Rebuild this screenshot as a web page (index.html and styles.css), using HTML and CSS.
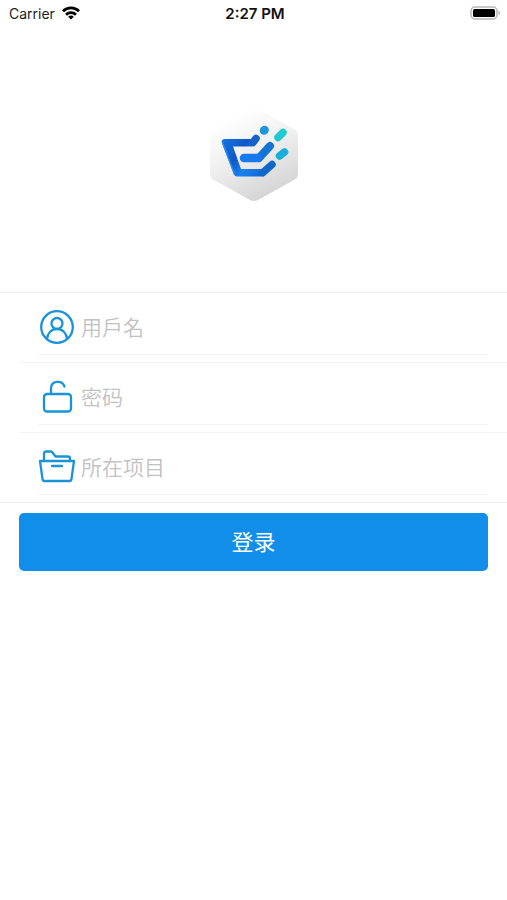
FILE: index.html
```
<!DOCTYPE html>
<html lang="zh">
<head>
  <meta charset="UTF-8">
  <meta name="viewport" content="width=device-width, initial-scale=1.0">
  <title>登录</title>
  <link rel="stylesheet" href="styles.css">
</head>
<body>
  <header class="status-bar">
    <div class="carrier">
      <span>Carrier</span>
      <svg width="18" height="14" viewBox="0 0 18 14" fill="none" stroke="#000" stroke-width="2.8">
        <path d="M1 5.2a11.4 11.4 0 0 1 16 0"/>
        <path d="M4 8.7a7.2 7.2 0 0 1 10 0"/>
        <path d="M9 13.6L6.2 10.8a4 4 0 0 1 5.6 0z" fill="#000" stroke="none"/>
      </svg>
    </div>
    <time class="time">2:27 PM</time>
    <div class="battery">
      <svg width="31" height="14" viewBox="0 0 31 14">
        <rect x="1" y="1" width="26" height="12" rx="4" fill="#fff" stroke="#b8b8b8" stroke-width="1.5"/>
        <rect x="3" y="3" width="22" height="8" rx="1.5" fill="#000"/>
        <path d="M28.5 4.8c2 .8 2 3.6 0 4.4z" fill="#b0b0b0"/>
      </svg>
    </div>
  </header>
  <main>
    <div class="logo">
      <svg width="88" height="94" viewBox="0 0 88 94">
        <defs>
          <linearGradient id="hex" x1="0.2" y1="0" x2="0.65" y2="1">
            <stop offset="0.1" stop-color="#fff"/>
            <stop offset="0.5" stop-color="#efeff0"/>
            <stop offset="1" stop-color="#d2d2d3"/>
          </linearGradient>
          <linearGradient id="blue" gradientUnits="userSpaceOnUse" x1="14" y1="34" x2="58" y2="66">
            <stop offset="0" stop-color="#1670e2"/>
            <stop offset="0.35" stop-color="#0f58c4"/>
            <stop offset="0.6" stop-color="#1b80f0"/>
            <stop offset="1" stop-color="#1164cc"/>
          </linearGradient>
        </defs>
        <path d="M40 2q4-2 8 0l36 20q4 2 4 7v38q0 4-4 6L48 93q-4 2-8 0L4 73q-4-2-4-6V29q0-5 4-7z" fill="url(#hex)"/>
        <path d="M15 32H46L42 39.500H23L31 62H58L55 68Q54 69.500 52 69.500H27Q25 69.500 24 67.500L12 36Q11 32 15 32z" fill="url(#blue)"/>
        <path d="M12.500 35.500L24.500 67" stroke="#2590f8" stroke-width="1.500" stroke-linecap="round"/>
        <g fill="none" stroke-linecap="round" stroke-linejoin="round">
          <path d="M43 35.500l3-4" stroke="#1262c8" stroke-width="7.500"/>
          <path d="M49 51L60 39" stroke="#1473d5" stroke-width="8"/>
          <path d="M34 51H48" stroke="#1879ec" stroke-width="8.500"/>
          <path d="M53 65.500l9-8" stroke="#1267cb" stroke-width="7.500"/>
          <path d="M54 23.500l.6-.6" stroke="#1d97dc" stroke-width="8.500"/>
          <path d="M68 30.500l5-5" stroke="#20cbd0" stroke-width="7.500"/>
          <path d="M69.500 49l5-4" stroke="#1aaedb" stroke-width="7.500"/>
        </g>
      </svg>
    </div>
    <form>
      <div class="fields">
        <div class="row">
          <div class="field">
            <label for="username" aria-label="用戶名">
              <svg class="icon" viewBox="0 0 36 36">
                <circle cx="18" cy="18" r="15.8"/>
                <circle cx="18" cy="14.500" r="5.500"/>
                <path d="M8 30c.5-6 4.500-10 10-10s9.500 4 10 10"/>
              </svg>
            </label>
            <input type="text" id="username" lang="zh-TW" placeholder="用戶名">
          </div>
        </div>
        <div class="row">
          <div class="field">
            <label for="password" aria-label="密码">
              <svg class="icon" viewBox="0 0 36 36">
                <rect x="5" y="15" width="27" height="17.5" rx="3"/>
                <path d="M12 15V9.500c0-8 11-9 13.500-2"/>
              </svg>
            </label>
            <input type="password" id="password" placeholder="密码">
          </div>
        </div>
        <div class="row">
          <div class="field">
            <label for="project" aria-label="所在项目">
              <svg class="icon" viewBox="0 0 36 36">
                <path d="M1 12h34l-2.500 18q-.3 2-2 2H5.500q-1.700 0-2-2z"/>
                <path d="M5 12V4.500q0-2 2-2h4.500q1.200 0 2 1l3 4H29q2 0 2 2V12"/>
                <path d="M13 17h10"/>
              </svg>
            </label>
            <input type="text" id="project" placeholder="所在项目">
          </div>
        </div>
      </div>
      <button class="login" type="button">登录</button>
    </form>
  </main>
</body>
</html>
```
FILE: styles.css
```
body {
  margin: 0;
  background-color: #fff;
  font-family: Inter, "Noto Sans CJK SC", sans-serif;
  color: #222;
}
svg {
  display: block;
}
.status-bar {
  display: grid;
  grid-template-columns: 1fr auto 1fr;
  align-items: center;
  height: 26px;
  padding: 0 6px 0 9px;
  font-size: 14px;
}
.carrier {
  display: flex;
  align-items: center;
  gap: 7px;
}
.time {
  font-size: 15px;
  font-weight: 600;
  color: #111;
}
.battery {
  justify-self: end;
}
.logo {
  display: flex;
  justify-content: center;
  padding: 81px 0 91px;
}
.fields {
  border-top: 1px solid #eee;
  border-bottom: 1px solid #eee;
}
.row {
  margin-left: 20px;
  padding: 0 19px 7px 18px;
  border-bottom: 1px solid #f3f3f3;
}
.row:last-child {
  border-bottom: none;
}
.field {
  display: flex;
  align-items: center;
  gap: 6px;
  height: 62px;
  padding: 7px 0 0 1px;
  box-sizing: border-box;
  border-bottom: 1px solid #f3f3f3;
}
.icon {
  width: 36px;
  height: 36px;
  fill: none;
  stroke: #1a94d6;
  stroke-width: 2.3;
  stroke-linecap: round;
  stroke-linejoin: round;
}
.field input {
  flex: 1;
  min-width: 0;
  padding: 0 0 2px;
  border: none;
  outline: none;
  background: none;
  font-family: "Noto Sans CJK SC", sans-serif;
  font-size: 21px;
  font-weight: 350;
  color: #333;
}
.field input:lang(zh-TW) {
  font-family: "Noto Sans CJK TC", sans-serif;
}
.field input::placeholder {
  color: #c2c2c2;
}
.login {
  display: block;
  width: calc(100% - 38px);
  height: 58px;
  margin: 10px 19px;
  padding: 0 0 4px;
  border: none;
  border-radius: 5px;
  background-color: #108ee9;
  color: #fff;
  font-family: "Noto Sans CJK SC", sans-serif;
  font-size: 22px;
  cursor: pointer;
}
```
